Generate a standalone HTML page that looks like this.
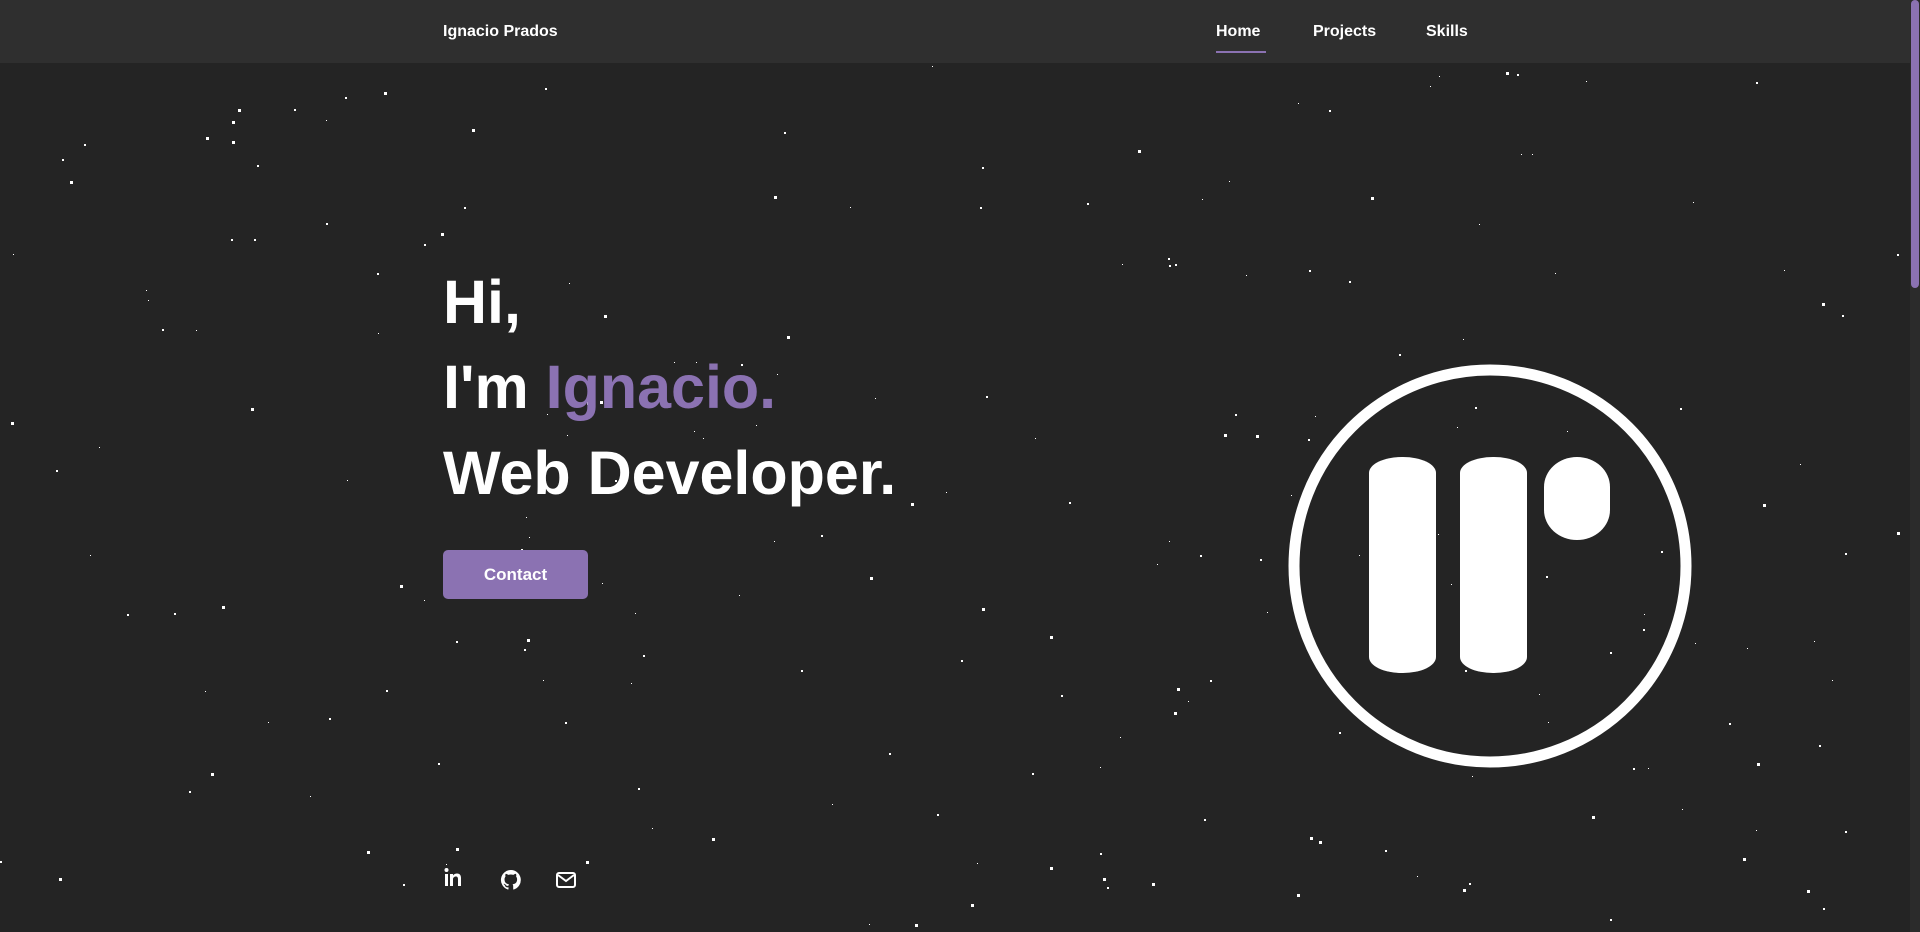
<!DOCTYPE html>
<html><head><meta charset="utf-8"><style>
*{margin:0;padding:0;box-sizing:border-box}
html,body{width:1920px;height:932px;overflow:hidden;background:#242424;font-family:"Liberation Sans",sans-serif;color:#fff}
.hdr{position:absolute;left:0;top:0;width:1910px;height:63px;background:#2f2f2f}
.hdr span{position:absolute;top:23px;font-weight:bold;font-size:16px}
.ul{position:absolute;left:1216px;top:51px;width:50px;height:2px;background:#8b72b2}
.sb{position:absolute;right:0;top:0;width:10px;height:932px;background:#2b2b2b}
.sb div{position:absolute;left:1px;top:0;width:8px;height:288px;border-radius:4px;background:#8b72b2}
h1{position:absolute;left:443px;font-size:61px;font-weight:bold;line-height:1}
.p{color:#8b72b2}
.btn{position:absolute;left:443px;top:550px;width:145px;height:49px;background:#8b72b2;border-radius:5px;font-weight:bold;font-size:17px;text-align:center;line-height:49px}
.s{position:absolute;background:#fff;width:2px;height:2px}
</style></head><body>
<div id="stars"></div>
<div class="hdr">
<span style="left:443px">Ignacio Prados</span>
<span style="left:1216px">Home</span>
<span style="left:1313px">Projects</span>
<span style="left:1426px">Skills</span>
<div class="ul"></div>
</div>
<h1 style="top:272px">Hi,</h1>
<h1 style="top:357px">I'm <span class="p">Ignacio.</span></h1>
<h1 style="top:443px">Web Developer.</h1>
<div class="btn">Contact</div>
<svg style="position:absolute;left:0;top:0" width="1920" height="932">
<circle cx="1490" cy="566" r="196" fill="none" stroke="#fff" stroke-width="11"/>
<rect x="1369" y="457" width="67" height="216" rx="33" ry="16" fill="#fff"/>
<rect x="1460" y="457" width="67" height="216" rx="33" ry="16" fill="#fff"/>
<rect x="1544" y="457" width="66" height="83" rx="33" ry="30" fill="#fff"/>
<g fill="#fff">
<rect x="445" y="874" width="3" height="12"/><circle cx="446.5" cy="870" r="2"/>
<path d="M450 874h3v1.5c1-1.5 2.5-2 4-2 3 0 4 2 4 4.5V886h-3v-7c0-1.5-.6-2.5-2-2.5s-3 1-3 2.5v7h-3z"/>
</g>
<path fill="#fff" d="M511 870a10 10 0 0 0-3.2 19.5c.5.1.7-.2.7-.5v-1.8c-2.8.6-3.4-1.3-3.4-1.3-.5-1.2-1.1-1.5-1.1-1.5-.9-.6.1-.6.1-.6 1 .1 1.5 1 1.5 1 .9 1.5 2.3 1.1 2.9.8.1-.6.3-1.1.6-1.3-2.2-.3-4.6-1.1-4.6-5 0-1.1.4-2 1-2.7-.1-.3-.4-1.3.1-2.7 0 0 .8-.3 2.7 1a9.4 9.4 0 0 1 5 0c1.9-1.3 2.7-1 2.7-1 .5 1.4.2 2.4.1 2.7.6.7 1 1.6 1 2.7 0 3.9-2.4 4.7-4.6 5 .4.3.7.9.7 1.9V889c0 .3.2.6.7.5A10 10 0 0 0 511 870z"/>
<rect x="557" y="873" width="18" height="14" rx="2" fill="none" stroke="#fff" stroke-width="2"/>
<path d="M558 875l8 6 8-6" fill="none" stroke="#fff" stroke-width="2"/>
</svg>
<div class="sb"><div></div></div>
<script>
var s="",seed=7;function r(){seed=(seed*16807)%2147483647;return seed/2147483647}
for(var i=0;i<220;i++){var x=Math.floor(r()*1905),y=64+Math.floor(r()*866),z=r()<0.2?3:(r()<0.5?2:1);
s+='<div class="s" style="left:'+x+'px;top:'+y+'px;width:'+z+'px;height:'+z+'px"></div>'}
document.getElementById('stars').innerHTML=s;
</script>
</body></html>
